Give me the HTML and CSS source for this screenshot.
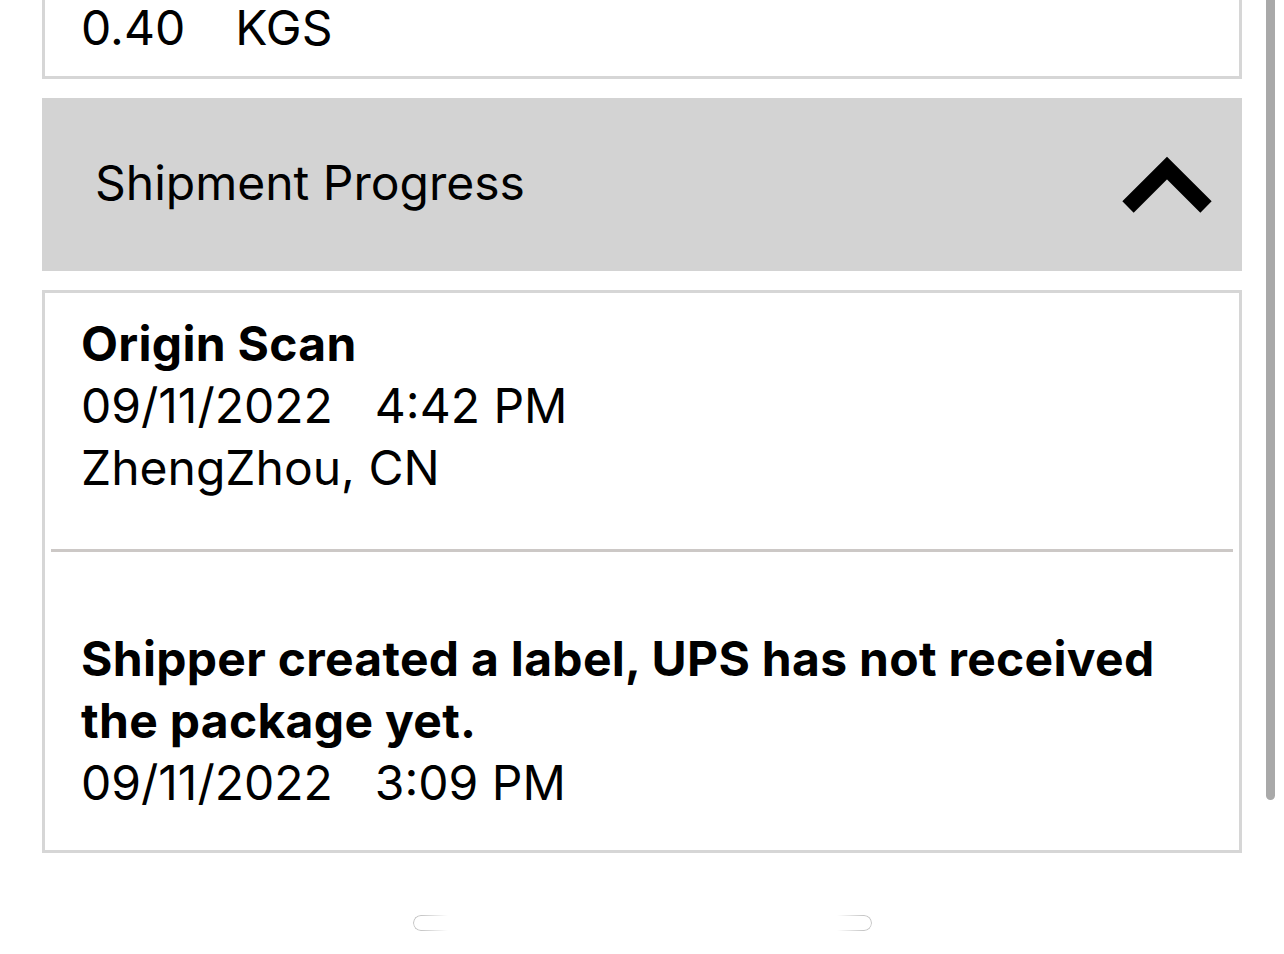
FILE: index.html
```html
<!DOCTYPE html>
<html lang="en">
<head>
    <meta charset="UTF-8">
    <meta name="viewport" content="width=device-width, initial-scale=1.0">
    <title>Shipment Progress</title>
    <link rel="stylesheet" href="styles.css">
</head>
<body>
    <div class="page">
        <div class="card weight">
            <div class="line short"><span class="gap-lg">0.40</span><span>KGS</span></div>
        </div>

        <div class="section-header">
            <span class="section-title">Shipment Progress</span>
            <svg class="chevron" width="90" height="60" viewBox="0 0 90 60">
                <polyline points="6,52 45,13 84,52" fill="none" stroke="#000" stroke-width="16" stroke-linejoin="miter" stroke-linecap="butt"/>
            </svg>
        </div>

        <div class="card progress">
            <div class="event first">
                <div class="line bold">Origin Scan</div>
                <div class="line"><span class="gap">09/11/2022</span><span>4:42 PM</span></div>
                <div class="line">ZhengZhou, CN</div>
            </div>
            <div class="divider"></div>
            <div class="event last">
                <div class="line bold">Shipper created a label, UPS has not received the package yet.</div>
                <div class="line"><span class="gap">09/11/2022</span><span>3:09 PM</span></div>
            </div>
        </div>

        <div class="indicator">
            <span class="pill-left"></span>
            <span class="pill-right"></span>
        </div>
    </div>

    <div class="scrollbar"></div>
</body>
</html>
```

FILE: styles.css
```css
body {
    margin: 0;
    background-color: #fff;
    color: #000;
    font-family: Inter, "Noto Sans", Arial, sans-serif;
    font-size: 48px;
    overflow: hidden;
}

.page {
    padding: 0 42px;
}

.card {
    border: 3px solid #d6d6d6;
    background-color: #fff;
}

.line {
    line-height: 62px;
}

.line.short {
    line-height: 48px;
}

.bold {
    font-weight: 700;
    letter-spacing: 0.3px;
}

.gap {
    margin-right: 42px;
}

.gap-lg {
    margin-right: 50px;
}

.weight {
    margin-top: -25px;
    padding: 26px 36px 24px;
}

.section-header {
    margin-top: 19px;
    height: 173px;
    background-color: #d3d3d3;
    display: flex;
    align-items: center;
    justify-content: space-between;
    padding: 0 30px 0 53px;
}

.section-title {
    margin-bottom: 5px;
}

.chevron {
    display: block;
}

.progress {
    margin-top: 19px;
}

.event {
    padding: 0 36px;
}

.event.first {
    padding-top: 20px;
    padding-bottom: 50px;
}

.event.last {
    padding-top: 76px;
    padding-bottom: 36px;
}

.divider {
    height: 3px;
    margin: 0 6px;
    background-color: #ccc8c6;
}

.indicator {
    width: 459px;
    margin: 62px auto 0;
    display: flex;
    justify-content: space-between;
}

.pill-left,
.pill-right {
    display: block;
    width: 34px;
    height: 14px;
    border: 1px solid #c4c4c4;
}

.pill-left {
    border-right: none;
    border-radius: 8px 0 0 8px;
    -webkit-mask-image: linear-gradient(to right, #000 20%, transparent);
    mask-image: linear-gradient(to right, #000 20%, transparent);
}

.pill-right {
    border-left: none;
    border-radius: 0 8px 8px 0;
    -webkit-mask-image: linear-gradient(to left, #000 20%, transparent);
    mask-image: linear-gradient(to left, #000 20%, transparent);
}

.scrollbar {
    position: absolute;
    top: -10px;
    right: 9px;
    width: 9px;
    height: 810px;
    border-radius: 5px;
    background-color: #a9a9a9;
}
```
